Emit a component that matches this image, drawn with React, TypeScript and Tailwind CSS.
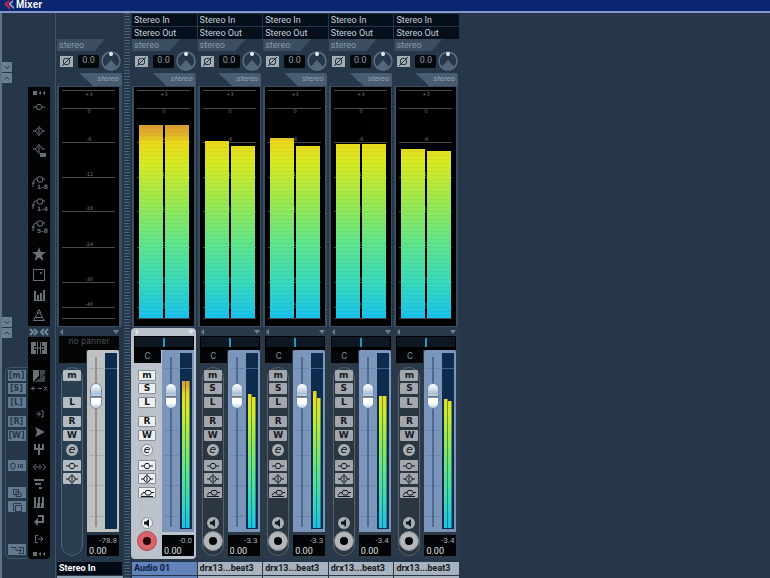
import React, { useState } from 'react';
import clsx from 'clsx';

interface Channel {
  id: string;
  name: string;
  kind: 'input' | 'audio';
  selected?: boolean;
  peak: string;
  // levels in pixels on the big meter and on the small one next to the fader
  levels: number[];
  faderLevels: number[];
}

const INPUT_CHANNEL: Channel = {
  id: 'in', name: 'Stereo In', kind: 'input', peak: '-78.8', levels: [], faderLevels: [],
};

const CHANNELS: Channel[] = [
  { id: 'a1', name: 'Audio 01', kind: 'audio', selected: true, peak: '-0.0', levels: [193, 193], faderLevels: [147, 147] },
  { id: 'a2', name: 'drx13...beat3', kind: 'audio', peak: '-3.3', levels: [177, 172], faderLevels: [134, 131] },
  { id: 'a3', name: 'drx13...beat3', kind: 'audio', peak: '-3.3', levels: [180, 172], faderLevels: [137, 130] },
  { id: 'a4', name: 'drx13...beat3', kind: 'audio', peak: '-3.4', levels: [174, 174], faderLevels: [132, 132] },
  { id: 'a5', name: 'drx13...beat3', kind: 'audio', peak: '-3.4', levels: [169, 167], faderLevels: [129, 127] },
];

const SCALE = [
  { y: 3, label: '+3', labelY: 9 },
  { y: 21, label: '0', labelY: 26 },
  { y: 55, label: '-6', labelY: 54 },
  { y: 90, label: '-12', labelY: 89 },
  { y: 124, label: '-18', labelY: 123 },
  { y: 160, label: '-24', labelY: 159 },
  { y: 195, label: '-30', labelY: 194 },
  { y: 220, label: '-40', labelY: 219 },
  { y: 231, label: '', labelY: 0 },
];

/* ---------- glyphs ---------- */

const Glyph: React.FC<{ className?: string; children: React.ReactNode }> = ({ className, children }) => (
  <svg viewBox="0 0 18 14" className={clsx('h-[14px] w-[18px]', className)} fill="none" stroke="currentColor" strokeWidth="1" aria-hidden="true">
    {children}
  </svg>
);

const insertPath = <path d="M3 7h3m6 0h3M7.500 4.500h3L12 7l-1.500 2.500h-3L6 7z" />;
const eqPath = <path d="M3 7h3m6 0h3M9 2v10M8 3.500L5.500 7 8 10.500M10 3.500L12.500 7 10 10.500" />;
const sendPath = <path d="M3 10.500h12M3 9.500l2-3h2M8 4.500h4L13.500 7 12 9H8.500L7 7zM13.500 6.500H16" />;

const SendGlyph: React.FC<{ label: string }> = ({ label }) => (
  <Glyph>
    <path d="M2 9l3-5h2m5 0h3M8 2h4l1 2-1 3H8L7 4zM5 8H3v4" />
    <text x="7" y="14" fontSize="6" fontWeight="bold" fill="currentColor" stroke="none" fontFamily="DejaVu Sans, sans-serif">{label}</text>
  </Glyph>
);

const DotsGlyph = () => (
  <Glyph>
    <path d="M3 5h4v4H3zM11 5v4L8.500 7zM15 5v4l-2.500-2z" fill="currentColor" stroke="none" />
  </Glyph>
);

const VIEW_TOOLS = [
  { label: 'Hide all', cell: 'h-[12px]', icon: <DotsGlyph /> },
  { label: 'Inserts', cell: 'mt-px h-[14px]', icon: <Glyph>{insertPath}</Glyph> },
  { label: 'Equalizers', cell: 'mt-[10px] h-[14px]', icon: <Glyph>{eqPath}</Glyph> },
  {
    label: 'Equalizer curve', cell: 'mt-[6px] h-[14px]',
    icon: <Glyph><path d="M3 5h3m6 0h3M9 0v10M8 1.500L5.500 5 8 8.500M10 1.500L12.500 5" /><path d="M10 9h6v4h-6z" fill="currentColor" stroke="none" /></Glyph>,
  },
  { label: 'Sends 1-8', cell: 'mt-[17px] h-[14px]', icon: <SendGlyph label="1-8" /> },
  { label: 'Sends 1-4', cell: 'mt-[8px] h-[14px]', icon: <SendGlyph label="1-4" /> },
  { label: 'Sends 5-8', cell: 'mt-[8px] h-[14px]', icon: <SendGlyph label="5-8" /> },
  {
    label: 'Surround', cell: 'mt-[14px] h-[14px]',
    icon: <Glyph><path d="M9 0l1.700 5H16l-4.200 3.200L13.400 14 9 10.500 4.600 14l1.600-5.800L2 5h5.300z" fill="currentColor" stroke="none" /></Glyph>,
  },
  {
    label: 'Panner', cell: 'mt-[7px] h-[14px]',
    icon: <Glyph><path d="M3.500 1.500h11v11h-11z" /><path d="M10.500 4.500h1v1h-1z" fill="currentColor" /></Glyph>,
  },
  { label: 'Meters', cell: 'mt-[6px] h-[14px]', icon: <Glyph><path d="M5 3v9M8 7v5M11 5v7M14 2v10" strokeWidth="2" /><path d="M4 12.500h11" /></Glyph> },
  {
    label: 'Control room', cell: 'mt-[6px] h-[14px]',
    icon: <Glyph><path d="M9 1.500L7 5h4zM8 5L5 9.500h7.500L10 5M3.500 12.500L5 9.500m7.500 0l2 3h-11" /></Glyph>,
  },
];

const COMMAND_TOOLS = [
  {
    label: 'Channels', cell: 'mt-[4px] h-[14px]',
    icon: (
      <Glyph>
        <path d="M1 1h5v4H4v4h2v4H1zM7 1h1v12H7zM10 1h1v12h-1zM17 1h-5v4h2v4h-2v4h5zM4.500 6h2v2h-2zM8.500 6h1v2h-1zM11.500 6h2v2h-2z" fill="currentColor" stroke="none" />
      </Glyph>
    ),
  },
  {
    label: 'Narrow', cell: 'mt-[14px] h-[14px]',
    icon: (
      <Glyph>
        <path d="M3 1h6v6l-6 6z" fill="currentColor" stroke="none" />
        <path d="M10 1h5v4l-5 4zM4 13l11-7v7z" fill="currentColor" fillOpacity="0.6" stroke="none" />
      </Glyph>
    ),
  },
  { label: 'Add', cell: 'h-[10px]', icon: <Glyph><path d="M1 7.500h4M3 5.500v4M8 7.500h4M14 5.500l3 4M17 5.500l-3 4" /></Glyph> },
  { label: 'Input', cell: 'mt-[14px] h-[14px]', icon: <Glyph><path d="M6 7h4M8 4.500L10.500 7 8 9.500M11 4h2v6h-2" /></Glyph> },
  { label: 'Audio', cell: 'mt-[4px] h-[14px]', icon: <Glyph><path d="M5 2l10 5L5 12l2-5z" fill="currentColor" stroke="none" /></Glyph> },
  {
    label: 'MIDI', cell: 'mt-[3px] h-[14px]',
    icon: <Glyph><path d="M4 2h2v4h2V2h2v4h2V2h2v6h-4v5H8V8H4z" fill="currentColor" stroke="none" /></Glyph>,
  },
  { label: 'Link', cell: 'mt-[4px] h-[14px]', icon: <Glyph><path d="M6 4L3.500 7 6 10M5 7h5M9 4.500L11.500 7 9 9.500M13 4l2.500 3L13 10" /></Glyph> },
  { label: 'Groups', cell: 'mt-[3px] h-[14px]', icon: <Glyph><path d="M4 3h10M5 7h6M9 11h3" strokeWidth="2" /></Glyph> },
  { label: 'Instruments', cell: 'mt-[4px] h-[14px]', icon: <Glyph><path d="M5 2v11M9 2v11M13 2v11" strokeWidth="2" /><path d="M4 12.500h10M7.500 8v5M11.500 8v5" /></Glyph> },
  { label: 'Effects return', cell: 'mt-[4px] h-[14px]', icon: <Glyph><path d="M8 3h5v6H6" strokeWidth="2" /><path d="M8 5v8L4 9z" fill="currentColor" stroke="none" /></Glyph> },
  { label: 'Output', cell: 'mt-[5px] h-[14px]', icon: <Glyph><path d="M8 3.500H5.500v7H8M8 7h5M10.500 4.500L13 7l-2.500 2.500" /></Glyph> },
  { label: 'Hide commands', cell: 'mt-[3px] h-[10px]', icon: <DotsGlyph /> },
];

const GLOBAL_BUTTONS = [
  { label: 'Mute all', cell: 'mt-[2px]', content: '[m]' },
  { label: 'Solo all', cell: 'mt-[2px]', content: '[S]' },
  { label: 'Listen all', cell: 'mt-[3px]', content: '[L]' },
  { label: 'Read all', cell: 'mt-[8px]', content: '[R]' },
  { label: 'Write all', cell: 'mt-[3px]', content: '[W]' },
  { label: 'Bypass', cell: 'mt-[19px]', content: <Glyph><path d="M3 5l3-1 1.500 3L6 10H4L2.500 7zM10.500 5v4M12.500 5.500h2v3h-2z" /></Glyph> },
  { label: 'Copy', cell: 'mt-[16px]', content: <Glyph><path d="M5.500 3.500h5v5h-5zM8 5.500h3l2 2v3H8z" /></Glyph> },
  { label: 'Paste', cell: 'mt-[3px]', content: <Glyph><path d="M13 3.500H5.500v7H7M7.500 5.500h6v6h-6z" /></Glyph> },
  { label: 'Reset', cell: 'mt-[32px]', content: <Glyph><path d="M3 4.500h5v3h5M11.500 5.500l2 2-2 2M10.500 4.500h5v6h-5" /></Glyph> },
];

/* ---------- left side ---------- */

const FoldButton: React.FC<{ label: string; up?: boolean; className?: string }> = ({ label, up, className }) => (
  <button aria-label={label} className={clsx('flex h-[10px] w-[10px] items-center justify-center bg-[#6b8093] text-[#24384a]', className)}>
    <svg viewBox="0 0 8 8" className="h-2 w-2" fill="none" stroke="currentColor" aria-hidden="true">
      <path d={up ? 'M1.500 5.500L4 3l2.500 2.500' : 'M1.500 3L4 5.500 6.500 3'} />
    </svg>
  </button>
);

const ToolStrip: React.FC<{ tools: typeof VIEW_TOOLS; className: string }> = ({ tools, className }) => (
  <div className={clsx('flex w-[22px] flex-col items-center bg-[#020304] text-[#6c7074]', className)}>
    {tools.map((tool) => (
      <button key={tool.label} aria-label={tool.label} className={clsx('flex w-full shrink-0 items-center justify-center', tool.cell)}>
        {tool.icon}
      </button>
    ))}
  </div>
);

const CommonPanel = () => (
  <aside className="flex w-14 shrink-0 border-r border-l-2 border-r-[#3f556a] border-l-[#5d7488]">
    <div className="flex w-[26px] flex-col">
      <FoldButton label="Show routing" className="mt-[49px]" />
      <FoldButton label="Hide routing" up className="mt-px" />
      <FoldButton label="Show extended" className="mt-[234px]" />
      <FoldButton label="Hide extended" up className="mt-px" />
      <div className="mt-[29px] ml-[3px] flex h-[192px] flex-col items-center rounded-l-md border border-r-0 border-[#3f556a] pr-px">
        {GLOBAL_BUTTONS.map((b) => (
          <button
            key={b.label}
            aria-label={b.label}
            className={clsx('flex h-[11px] w-[18px] shrink-0 items-center justify-center overflow-hidden bg-[#64798d] font-["DejaVu_Sans",sans-serif] text-[8px] leading-[11px] font-bold text-[#25394c]', b.cell)}
          >
            {b.content}
          </button>
        ))}
      </div>
    </div>
    <div className="flex flex-col pt-[74px]">
      <ToolStrip tools={VIEW_TOOLS} className="h-[239px]" />
      <button aria-label="Narrow all" className="flex h-[11px] w-[22px] items-center justify-center text-[#71889c]">
        <svg viewBox="0 0 20 8" className="h-2 w-5" fill="none" stroke="currentColor" strokeWidth="2" aria-hidden="true">
          <path d="M1 1l3 3-3 3M5 1l3 3-3 3M15 1l-3 3 3 3M19 1l-3 3 3 3" />
        </svg>
      </button>
      <ToolStrip tools={COMMAND_TOOLS} className="h-[222px] rounded-b-sm" />
    </div>
  </aside>
);

/* ---------- channel strip parts ---------- */

const LevelGradient: React.FC<{ id: string; top: number; bottom: number }> = ({ id, top, bottom }) => (
  <defs>
    <linearGradient id={id} gradientUnits="userSpaceOnUse" x1="0" x2="0" y1={top} y2={bottom}>
      <stop offset="0" stopColor="#dc9c34" />
      <stop offset="0.04" stopColor="#e0ac2c" />
      <stop offset="0.09" stopColor="#ead91c" />
      <stop offset="0.2" stopColor="#d6ea24" />
      <stop offset="0.4" stopColor="#9ae850" />
      <stop offset="0.62" stopColor="#5ee48c" />
      <stop offset="0.82" stopColor="#38d8bc" />
      <stop offset="1" stopColor="#18c2ea" />
    </linearGradient>
  </defs>
);

const BigMeter: React.FC<{ channel: Channel }> = ({ channel }) => (
  <svg viewBox="0 0 60 239" className="block h-[239px] w-[60px] bg-black" role="img" aria-label={`${channel.name} level`}>
    <LevelGradient id={`level-${channel.id}`} top={38} bottom={231} />
    {SCALE.map((s) => (
      <g key={s.y}>
        <path d={`M3 ${s.y + 0.5}h53`} stroke="#464b52" />
        <text x="30" y={s.labelY} fontSize="5" textAnchor="middle" fill="#73797f" fontFamily="DejaVu Sans, sans-serif">{s.label}</text>
      </g>
    ))}
    {channel.levels.map((level, i) => (
      <rect key={i} x={5 + i * 26} y={231 - level} width="24" height={level} fill={`url(#level-${channel.id})`} />
    ))}
    {channel.levels.map((level, i) =>
      Array.from({ length: Math.floor(level / 4) }, (_, n) => (
        <path key={`${i}-${n}`} d={`M${5 + i * 26} ${228.5 - n * 4}h24`} stroke="#000" strokeOpacity="0.03" />
      ))
    )}
  </svg>
);

const FaderMeter: React.FC<{ channel: Channel }> = ({ channel }) => (
  <svg viewBox="0 0 12 176" className="block h-[176px] w-[12px] bg-[#0d2b4d]" role="img" aria-label={`${channel.name} output level`}>
    <LevelGradient id={`out-${channel.id}`} top={28} bottom={175} />
    <path d="M0 15.500h12" stroke="#3d648f" />
    {channel.faderLevels.map((level, i) => (
      <g key={i}>
        <rect x={2 + i * 4} y={175 - level} width="4" height={level} fill={`url(#out-${channel.id})`} />
        <path d={`M${5.5 + i * 4} ${175 - level}v${level}`} stroke="#26545c" strokeOpacity="0.6" />
      </g>
    ))}
  </svg>
);

const Fader: React.FC<{ channel: Channel }> = ({ channel }) => {
  const [value, setValue] = useState(80);
  const isInput = channel.kind === 'input';

  return (
    <div className={clsx('relative flex h-[182px] w-[32px] justify-between rounded-t-xs py-[3px] pr-[2px] pl-[3px]', isInput ? 'bg-[#bfc0c0]' : 'bg-[#7b95bb]')}>
      <svg viewBox="0 0 32 182" className={clsx('absolute inset-0', isInput ? 'text-[#a9abad]' : 'text-[#6b86ae]')} fill="none" stroke="currentColor" aria-hidden="true">
        <path d="M2 18.500h15M2 48.500h15M2 80.500h15M2 105.500h15M2 135.500h15M2 166.500h15" />
        <path d="M9 7v170" stroke={isInput ? '#909295' : '#4f698f'} strokeWidth="2" />
      </svg>
      <input
        type="range"
        aria-label={`${channel.name} volume`}
        value={value}
        onChange={(e) => setValue(Number(e.target.value))}
        className="relative m-0 h-[176px] w-[12px] cursor-pointer appearance-none bg-transparent [direction:rtl] [writing-mode:vertical-lr] [&::-webkit-slider-thumb]:h-[26px] [&::-webkit-slider-thumb]:w-[12px] [&::-webkit-slider-thumb]:appearance-none [&::-webkit-slider-thumb]:rounded-full [&::-webkit-slider-thumb]:border [&::-webkit-slider-thumb]:border-[#6f8aa8] [&::-webkit-slider-thumb]:bg-[linear-gradient(#ffffff_0,#e4edf4_15%,#a9c0d4_40%,#c6d6e3_50%,#5f7182_51%,#5f7182_56%,#ffffff_57%,#ffffff_80%,#b7cfe2_100%)]"
      />
      <div className="relative">
        <FaderMeter channel={channel} />
      </div>
    </div>
  );
};

const StripButtons: React.FC<{ channel: Channel }> = ({ channel }) => {
  const isInput = channel.kind === 'input';
  const square = clsx(
    'flex h-[11px] w-[18px] shrink-0 items-center justify-center overflow-hidden rounded-[1px] font-["DejaVu_Sans",sans-serif] text-[9px] leading-[11px] font-bold text-[#15191d]',
    channel.selected ? 'border border-[#8b9097] bg-[#edf0f3]' : isInput ? 'bg-[#b4bcc3]' : 'bg-[#a2a7ad]'
  );
  const round = clsx('flex shrink-0 items-center justify-center rounded-full text-[#15191d]', channel.selected ? 'border border-[#8b9097] bg-[#edf0f3]' : 'bg-[#a9aeb4]');

  return (
    <div className={clsx('mt-[4px] ml-[2px] flex h-[189px] w-[22px] flex-col items-center rounded-full border', channel.selected ? 'border-[#c3c8d0]' : isInput ? 'border-[#4e6479] bg-[#2a3e51]' : 'border-[#55616d] bg-[#2b3640]')}>
      <button aria-label="Mute" className={clsx(square, 'mt-[2px]')}>m</button>
      {!isInput && <button aria-label="Solo" className={clsx(square, 'mt-[2px]')}>S</button>}
      <button aria-label="Listen" className={clsx(square, isInput ? 'mt-[16px]' : 'mt-[3px]')}>L</button>
      <button aria-label="Read automation" className={clsx(square, 'mt-[8px]')}>R</button>
      <button aria-label="Write automation" className={clsx(square, 'mt-[3px]')}>W</button>
      <button aria-label="Edit channel" className={clsx(round, 'mt-[3px] h-[12px] w-[12px] font-["DejaVu_Sans",sans-serif] text-[11px] leading-[10px] italic')}>e</button>
      <button aria-label="Bypass inserts" className={clsx(square, 'mt-[4px]')}><Glyph className="shrink-0">{insertPath}</Glyph></button>
      <button aria-label="Bypass equalizers" className={clsx(square, 'mt-[2px]')}><Glyph className="shrink-0">{eqPath}</Glyph></button>
      {!isInput && (
        <>
          <button aria-label="Bypass sends" className={clsx(square, 'mt-[3px]')}><Glyph className="shrink-0">{sendPath}</Glyph></button>
          <button aria-label="Monitor" className={clsx(round, 'mt-[19px] h-[12px] w-[12px]')}>
            <svg viewBox="0 0 8 8" className="h-2 w-2" fill="currentColor" aria-hidden="true"><path d="M6 0v8L3 5.500H1v-3h2z" /></svg>
          </button>
          <button
            aria-label="Record enable"
            className={clsx('mt-[2px] flex h-[20px] w-[20px] shrink-0 items-center justify-center rounded-full border', channel.selected ? 'border-[#b04a52] bg-[#d9646a]' : 'border-[#85898e] bg-[#b3b6ba]')}
          >
            <span className={clsx('h-[8px] w-[8px] rounded-full', channel.selected ? 'bg-[#2a0508]' : 'bg-black')} />
          </button>
        </>
      )}
    </div>
  );
};

const Panner: React.FC<{ channel: Channel }> = ({ channel }) => {
  if (channel.kind === 'input') {
    return <div className="h-[14px] w-[60px] bg-[#040506] text-center font-['DejaVu_Sans',sans-serif] text-[8px] leading-[12px] text-[#50555a]">no panner</div>;
  }
  return (
    <div className="h-[14px] w-[60px] bg-black">
      <input
        type="range"
        defaultValue={50}
        aria-label={`${channel.name} pan`}
        className="block h-[12px] w-[60px] appearance-none border border-black bg-[#0d1822] [&::-webkit-slider-thumb]:h-[9px] [&::-webkit-slider-thumb]:w-[2px] [&::-webkit-slider-thumb]:appearance-none [&::-webkit-slider-thumb]:bg-[#2b96b4]"
      />
    </div>
  );
};

const InputControls: React.FC<{ channel: Channel }> = ({ channel }) => (
  <div className="flex h-[20px] items-center pl-[4px]">
    <button aria-label="Phase" className="flex h-[11px] w-[13px] items-center justify-center bg-[#a3adb5] text-[#1d262e]">
      <svg viewBox="0 0 13 11" className="h-[11px] w-[13px]" fill="none" stroke="currentColor" strokeWidth="1" aria-hidden="true">
        <rect x="3.500" y="2.500" width="6" height="6" rx="2" />
        <path d="M2 10l9-9" />
      </svg>
    </button>
    <input
      defaultValue="0.0"
      aria-label={`${channel.name} trim`}
      className="ml-[5px] h-[13px] w-[21px] rounded-xs bg-[#04080c] text-center text-[9px] text-[#8d969f]"
    />
    <button aria-label="Input gain" className="ml-[2px]">
      <svg viewBox="0 0 20 20" className="block h-5 w-5" aria-hidden="true">
        <circle cx="10" cy="10" r="9" fill="#26374a" stroke="#5e7285" strokeWidth="1.500" />
        <path d="M10 9l6 6.500a8 8 0 0 1-12 0z" fill="#53677b" />
        <circle cx="10" cy="3" r="2" fill="#f0f4f8" />
      </svg>
    </button>
  </div>
);

const RouteSelect: React.FC<{ label: string; value: string; className?: string }> = ({ label, value, className }) => (
  <select aria-label={label} defaultValue={value} className={clsx('block h-[12px] w-full appearance-none bg-[#050f1b] pl-[2px] text-[9px] leading-[12px] text-[#c6d0d9]', className)}>
    <option>{value}</option>
  </select>
);

const ChannelStrip: React.FC<{ channel: Channel }> = ({ channel }) => {
  const isInput = channel.kind === 'input';

  return (
    <section aria-label={channel.name} className="flex flex-col">
      {/* routing */}
      <div className="mt-px h-[25px] pl-px">
        {!isInput && (
          <>
            <RouteSelect label="Input routing" value="Stereo In" />
            <RouteSelect label="Output routing" value="Stereo Out" className="mt-px" />
          </>
        )}
      </div>

      <div className="ml-px h-[12px] w-[48px] bg-[#3c4f62] pl-[2px] text-[9px] leading-[12px] text-[#8c9cab] [clip-path:polygon(0_0,100%_0,78%_100%,0_100%)]">stereo</div>
      <InputControls channel={channel} />

      <div className="mt-[2px] mr-px h-[13px] self-end rounded-tr-xs bg-[#495d72] pr-[3px] pl-[18px] text-[8px] leading-[12px] text-[#93a4b4] italic [clip-path:polygon(0_0,100%_0,100%_100%,32%_100%)]">stereo</div>
      <div className="mr-px ml-px bg-[#394d61] py-px pl-[2px]">
        <BigMeter channel={channel} />
      </div>

      {/* fader section */}
      <div className={clsx('mt-px h-[231px] rounded-sm pl-[3px]', channel.selected ? 'mr-px bg-[#bcc2cb]' : isInput ? 'bg-transparent' : 'bg-[#2b3a48]')}>
        <div className={clsx('flex h-[8px] w-[60px] items-center justify-between', channel.selected ? 'text-[#e2e6ea]' : 'text-[#71818f]')}>
          <button aria-label="Channel options"><svg viewBox="0 0 4 6" className="h-[6px] w-[4px]" fill="currentColor" aria-hidden="true"><path d="M4 0v6L1 3z" /></svg></button>
          <button aria-label="View options"><svg viewBox="0 0 6 4" className="h-[4px] w-[6px]" fill="currentColor" aria-hidden="true"><path d="M0 0h6L3 4z" /></svg></button>
        </div>
        <Panner channel={channel} />
        <div className="flex w-[60px]">
          <div className="w-[28px]">
            <div className="h-[13px] w-[27px] bg-[#040506] text-center text-[9px] leading-[12px] text-[#858c92]">{isInput ? '' : 'C'}</div>
            <StripButtons channel={channel} />
          </div>
          <div>
            <Fader channel={channel} />
            <div className="mt-[3px] flex h-[21px] w-[32px] flex-col bg-[#030405] px-[2px] text-[9px] leading-[10px]">
              <output aria-label="Peak" className="block text-right text-[8px] leading-[11px] text-[#a8adb2]">{channel.peak}</output>
              <input aria-label="Volume" defaultValue="0.00" className="block h-[10px] w-full bg-transparent text-[#dfe3e6]" />
            </div>
          </div>
        </div>
      </div>

      {/* name plate */}
      <input
        defaultValue={channel.name}
        aria-label="Channel name"
        className={clsx('mt-[3px] ml-px h-[13px] w-auto min-w-0 pl-[2px] text-[9px] leading-[13px] font-bold', isInput ? 'mr-px bg-[#020a16] text-white' : channel.selected ? 'bg-[#6282ba] text-[#0a1c48]' : 'bg-[#a9b3bf] text-[#14181d]')}
      />
      <div className={clsx('mt-px ml-px h-[2px]', isInput ? 'bg-[#8fa3b5]' : channel.selected ? 'bg-[#6282ba]' : 'bg-[#a9b3bf]')} />
    </section>
  );
};

export default function App() {
  return (
    <div className="flex min-h-screen flex-col overflow-hidden bg-[#263749] font-[Roboto,'Liberation_Sans',sans-serif] select-none">
      <header className="flex h-[13px] items-start border-b-2 border-[#8497cc] bg-[#0a2670] pl-[4px]">
        <svg viewBox="0 0 10 10" className="h-[10px] w-[10px]" aria-hidden="true">
          <path d="M0 4l5-4v3L3 4.500 6 7v3z" fill="#c22742" />
          <path d="M5 3l4-3v2L7 4l3 3v2L5 5z" fill="#a898bd" />
        </svg>
        <h1 className="pl-[2px] font-['Liberation_Sans',sans-serif] text-[10px] leading-[9px] font-bold text-white">Mixer</h1>
      </header>

      <main className="flex flex-1">
        <CommonPanel />
        <div className="w-[67px] shrink-0">
          <ChannelStrip channel={INPUT_CHANNEL} />
        </div>
        <div className="mr-px ml-px w-[6px] shrink-0 bg-[repeating-linear-gradient(#4b6074_0,#4b6074_1px,#25374a_1px,#25374a_3px)]" />
        <div className="grid w-[328px] shrink-0 grid-cols-5">
          {CHANNELS.map((channel) => (
            <ChannelStrip key={channel.id} channel={channel} />
          ))}
        </div>
        <div className="flex-1" />
      </main>
    </div>
  );
}
